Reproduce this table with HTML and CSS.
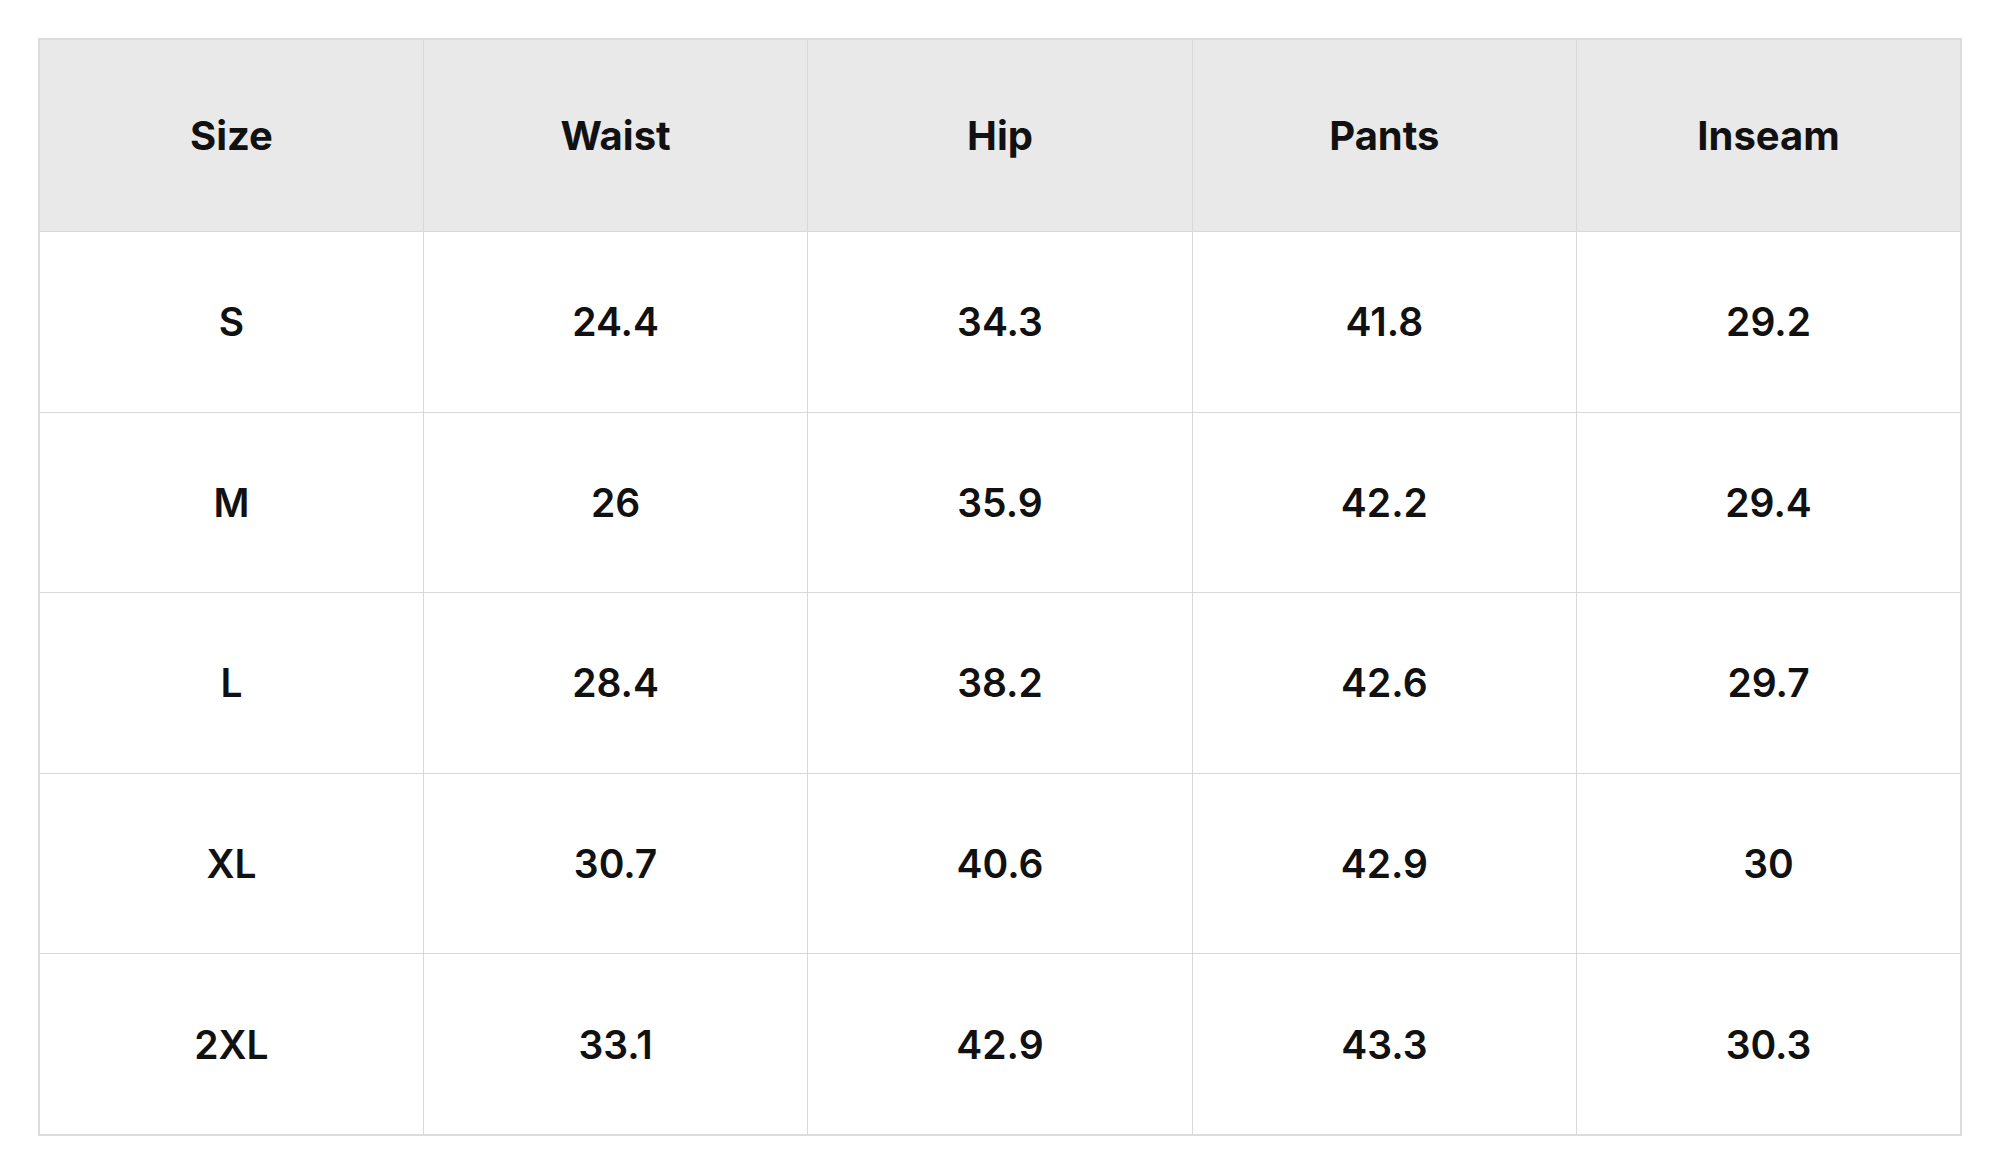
FILE: index.html
```html
<!DOCTYPE html>
<html lang="en">
<head>
<meta charset="utf-8">
<title>Size Chart</title>
<link rel="stylesheet" href="styles.css">
</head>
<body>
<div class="wrap">
<table class="size-table">
  <thead>
    <tr><th>Size</th><th>Waist</th><th>Hip</th><th>Pants</th><th>Inseam</th></tr>
  </thead>
  <tbody>
    <tr><td>S</td><td>24.4</td><td>34.3</td><td>41.8</td><td>29.2</td></tr>
    <tr><td>M</td><td>26</td><td>35.9</td><td>42.2</td><td>29.4</td></tr>
    <tr><td>L</td><td>28.4</td><td>38.2</td><td>42.6</td><td>29.7</td></tr>
    <tr><td>XL</td><td>30.7</td><td>40.6</td><td>42.9</td><td>30</td></tr>
    <tr><td>2XL</td><td>33.1</td><td>42.9</td><td>43.3</td><td>30.3</td></tr>
  </tbody>
</table>
</div>
</body>
</html>
```

FILE: styles.css
```css
html, body {
  margin: 0;
  padding: 0;
  background: #ffffff;
}
body {
  font-family: Inter, "Noto Sans", "Liberation Sans", sans-serif;
  color: #111111;
}
.wrap {
  padding: 38px 0 0 38px;
}
.size-table {
  width: 1924px;
  border-collapse: collapse;
  border: 2px solid #dcdcdc;
  table-layout: fixed;
}
.size-table th,
.size-table td {
  border: 1px solid #d9d9d9;
  text-align: center;
  vertical-align: middle;
  padding: 0;
}
.size-table th {
  background: #e9e9e9;
  height: 191px;
  font-size: 40px;
  font-weight: 700;
}
.size-table td {
  height: 179.6px;
  font-size: 39px;
  font-weight: 600;
}
```
